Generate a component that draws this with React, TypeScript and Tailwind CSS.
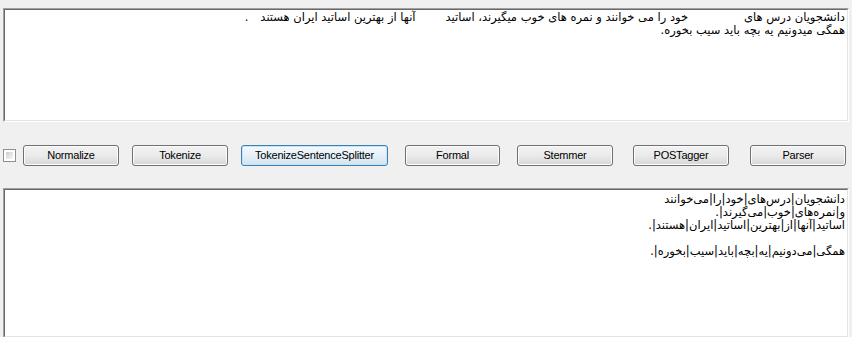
import React from "react";

const arabicFont = { fontFamily: '"DejaVu Sans", "Noto Sans", sans-serif' };

function TextBox({ className, children }: { className: string; children?: React.ReactNode }) {
  return (
    <div className={`border border-t-[#a0a0a0] border-l-[#a0a0a0] border-b-white border-r-white ${className}`}>
      <div className="h-full border border-t-[#696969] border-l-[#696969] border-b-[#e3e3e3] border-r-[#e3e3e3] bg-white">
        {children}
      </div>
    </div>
  );
}

function Btn({ label, className, focused }: { label: string; className: string; focused?: boolean }) {
  return (
    <div
      className={`h-[21px] flex items-center justify-center rounded-[3px] border text-[11px] text-black leading-none tracking-[-0.02em] ${
        focused
          ? "border-[#3c7fb1] bg-gradient-to-b from-[#f4f9fd] via-[#e6f1f8] to-[#d3e3ee] shadow-[inset_0_0_0_1px_#c6e4f7]"
          : "border-[#707070] bg-gradient-to-b from-[#f2f2f2] via-[#ebebeb] to-[#d6d6d6] shadow-[inset_0_0_0_1px_#fcfcfc]"
      } ${className}`}
      style={{ fontFamily: '"Liberation Sans", Arial, sans-serif' }}
    >
      {label}
    </div>
  );
}

export default function App() {
  return (
    <div className="w-[852px] h-[337px] bg-[#f0f0f0] overflow-hidden">
      <div className="pt-[8px] pl-[3px] pr-[3px]">
        <TextBox className="h-[114px]">
          <div dir="rtl" className="pr-[2px] pt-[1px] text-[11.5px] leading-[13px] text-black whitespace-pre" style={arabicFont}>
            <div>
              دانشجویان درس های
              <span className="inline-block w-[56px]" />
              خود را می خوانند و نمره های خوب میگیرند، اساتید
              <span className="inline-block w-[30px]" />
              آنها از بهترین اساتید ایران هستند
              <span className="inline-block w-[12px]" />.
            </div>
            <div>همگی میدونیم یه بچه باید سیب بخوره.</div>
          </div>
        </TextBox>
      </div>

      <div className="mt-[23px] h-[21px] flex items-center pl-[3px]">
        <div className="w-[13px] h-[13px] border border-[#8e8f8f] bg-white p-[2px]">
          <div className="w-full h-full bg-gradient-to-br from-[#cbcfd5] to-[#f6f6f6]" />
        </div>
        <Btn label="Normalize" className="ml-[7px] w-[96px]" />
        <Btn label="Tokenize" className="ml-[13px] w-[96px]" />
        <Btn label="TokenizeSentenceSplitter" className="ml-[13px] w-[147px]" focused />
        <Btn label="Formal" className="ml-[17px] w-[95px]" />
        <Btn label="Stemmer" className="ml-[17px] w-[96px]" />
        <Btn label="POSTagger" className="ml-[20px] w-[96px]" />
        <Btn label="Parser" className="ml-[21px] w-[96px]" />
      </div>

      <div className="mt-[22px] pl-[3px] pr-[3px]">
        <TextBox className="h-[150px]">
          <div dir="rtl" className="pr-[2px] pt-[3px] text-[11.5px] leading-[13px] text-black whitespace-pre" style={arabicFont}>
            <div>دانشجویان|درس‌های|خود|را|می‌خوانند</div>
            <div>و|نمره‌های|خوب|می‌گیرند|.</div>
            <div>اساتید|آنها|از|بهترین|اساتید|ایران|هستند|.</div>
            <div>{"\u00a0"}</div>
            <div>همگی|می‌دونیم|یه|بچه|باید|سیب|بخوره|.</div>
          </div>
        </TextBox>
      </div>
    </div>
  );
}
